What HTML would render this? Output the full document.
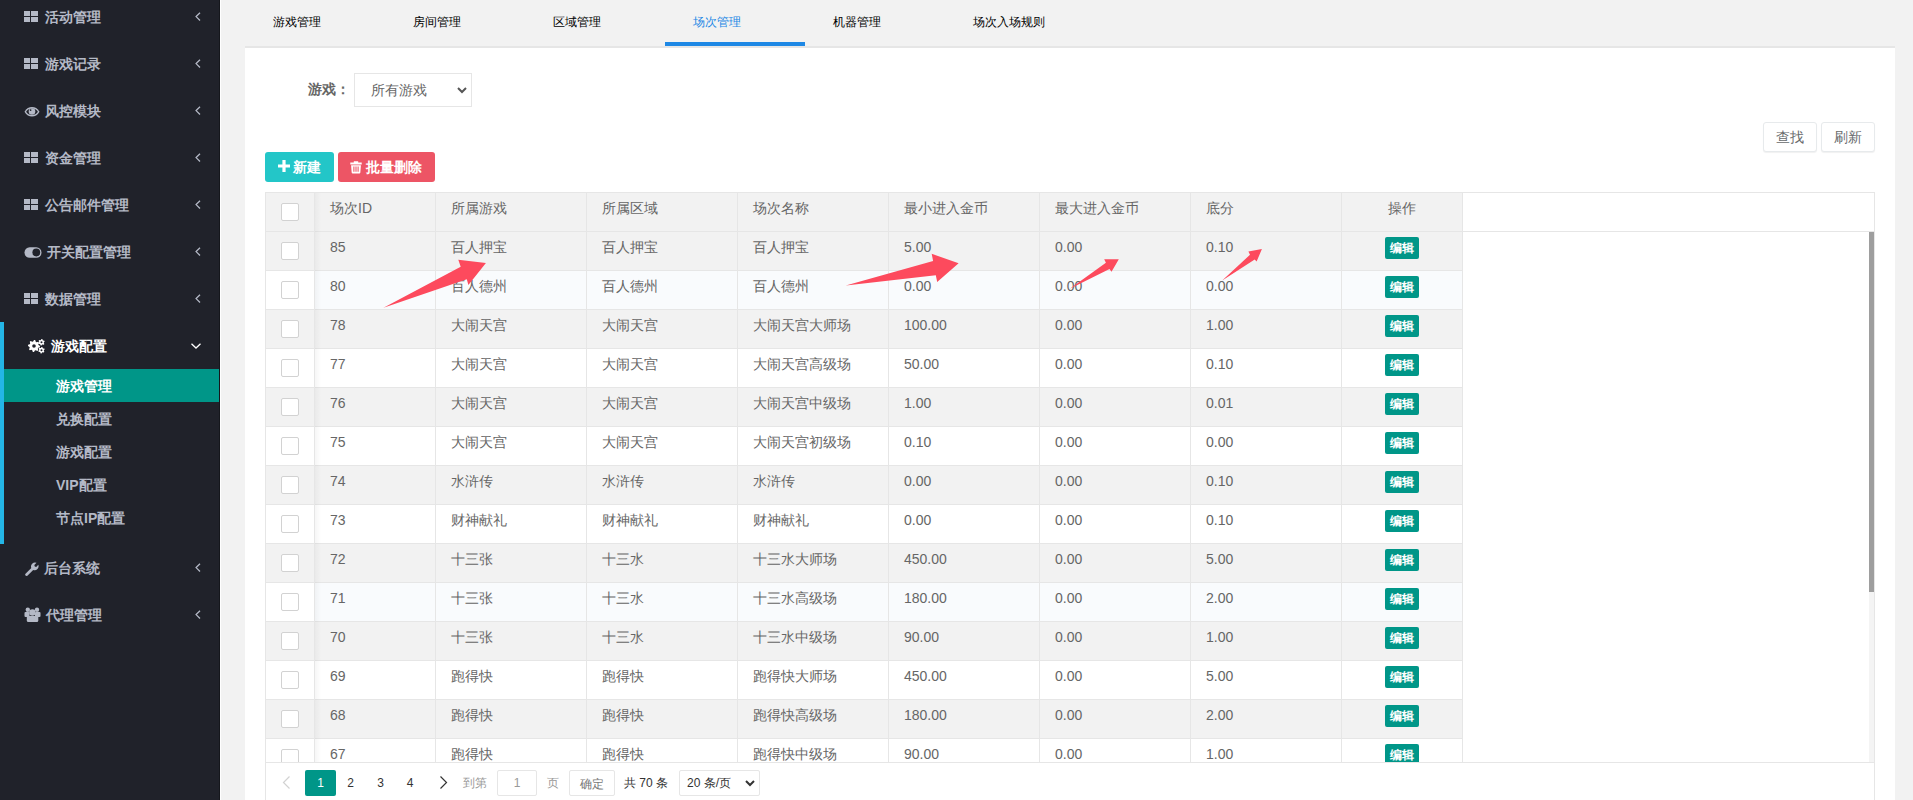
<!DOCTYPE html><html><head><meta charset="utf-8"><style>
*{margin:0;padding:0;box-sizing:border-box}
html,body{width:1913px;height:800px;overflow:hidden;background:#f2f2f2;font-family:"Liberation Sans",sans-serif;position:relative}
div,span{position:absolute;white-space:nowrap}
#side{left:0;top:0;width:219px;height:800px;background:#20222a}
#sideedge{left:219px;top:0;width:1px;height:800px;background:#15171c}
#sidew{left:220px;top:0;width:1px;height:800px;background:#fff}
.mi{left:0;width:219px;height:47px;color:#b4b9c6;font-size:14px;font-weight:bold;line-height:47px}
.mi .t{left:44.5px;top:1px}
.chev{left:195px;width:6px;height:10px}
.sub{left:0;width:219px;height:33px;color:#b4b9c6;font-size:14px;font-weight:bold;line-height:33px}
.sub .t{left:56px;top:1px}
#panel{left:245px;top:46px;width:1650px;height:754px;background:#fff;border-top:2px solid #e6e6e6}
.tab{top:1px;height:42px;line-height:42px;font-size:12px;color:#333}
.hd{font-size:14px;color:#666}
.cell{font-size:14px;color:#666;line-height:39px;height:39px}
.cb{width:18px;height:18px;border:1px solid #d2d2d2;border-radius:2px;background:#fff}
.ebtn{width:34px;height:22px;background:#009688;border-radius:2px;color:#fff;font-size:12px;font-weight:bold;line-height:22px;text-align:center}
.vl{width:1px;background:#e6e6e6}
.hl{height:1px;background:#e6e6e6}
</style></head><body>
<div id="side"></div><div id="sideedge"></div><div id="sidew"></div>
<div class="mi" style="top:-7px">
<svg width="14" height="11" style="position:absolute;left:24px;top:18px"><g fill="currentColor"><rect x="0" y="0" width="6" height="5"/><rect x="7" y="0" width="7" height="5"/><rect x="0" y="6" width="6" height="5"/><rect x="7" y="6" width="7" height="5"/></g></svg>
<span class="t">活动管理</span>
<svg width="6" height="10" style="position:absolute;left:195px;top:19px"><path d="M5 0.7 L1.1 4.6 L5 8.5" stroke="currentColor" stroke-width="1.3" fill="none"/></svg>
</div>
<div class="mi" style="top:40px">
<svg width="14" height="11" style="position:absolute;left:24px;top:18px"><g fill="currentColor"><rect x="0" y="0" width="6" height="5"/><rect x="7" y="0" width="7" height="5"/><rect x="0" y="6" width="6" height="5"/><rect x="7" y="6" width="7" height="5"/></g></svg>
<span class="t">游戏记录</span>
<svg width="6" height="10" style="position:absolute;left:195px;top:19px"><path d="M5 0.7 L1.1 4.6 L5 8.5" stroke="currentColor" stroke-width="1.3" fill="none"/></svg>
</div>
<div class="mi" style="top:87px">
<svg width="16" height="11" style="position:absolute;left:24px;top:19.7px"><path d="M0.5 4.8 C2.5 1.2 5 0.1 8 0.1 C11 0.1 13.5 1.2 15.5 4.8 C13.5 8.4 11 9.4 8 9.4 C5 9.4 2.5 8.4 0.5 4.8Z" fill="currentColor"/><path d="M2.1 4.8 C3.6 2.4 5.6 1.5 8 1.5 C10.4 1.5 12.4 2.4 13.9 4.8 C12.4 7.2 10.4 8.1 8 8.1 C5.6 8.1 3.6 7.2 2.1 4.8Z" fill="#20222a"/><circle cx="8" cy="4.5" r="3.3" fill="currentColor"/><circle cx="6.6" cy="3.1" r="0.9" fill="#20222a"/></svg>
<span class="t" style="left:45px">风控模块</span>
<svg width="6" height="10" style="position:absolute;left:195px;top:19px"><path d="M5 0.7 L1.1 4.6 L5 8.5" stroke="currentColor" stroke-width="1.3" fill="none"/></svg>
</div>
<div class="mi" style="top:134px">
<svg width="14" height="11" style="position:absolute;left:24px;top:18px"><g fill="currentColor"><rect x="0" y="0" width="6" height="5"/><rect x="7" y="0" width="7" height="5"/><rect x="0" y="6" width="6" height="5"/><rect x="7" y="6" width="7" height="5"/></g></svg>
<span class="t">资金管理</span>
<svg width="6" height="10" style="position:absolute;left:195px;top:19px"><path d="M5 0.7 L1.1 4.6 L5 8.5" stroke="currentColor" stroke-width="1.3" fill="none"/></svg>
</div>
<div class="mi" style="top:181px">
<svg width="14" height="11" style="position:absolute;left:24px;top:18px"><g fill="currentColor"><rect x="0" y="0" width="6" height="5"/><rect x="7" y="0" width="7" height="5"/><rect x="0" y="6" width="6" height="5"/><rect x="7" y="6" width="7" height="5"/></g></svg>
<span class="t">公告邮件管理</span>
<svg width="6" height="10" style="position:absolute;left:195px;top:19px"><path d="M5 0.7 L1.1 4.6 L5 8.5" stroke="currentColor" stroke-width="1.3" fill="none"/></svg>
</div>
<div class="mi" style="top:228px">
<svg width="18" height="11" style="position:absolute;left:24px;top:18.5px"><rect x="0.5" y="0.3" width="17" height="10.4" rx="5.2" fill="currentColor"/><circle cx="12.3" cy="5.5" r="3.9" fill="#20222a"/></svg>
<span class="t" style="left:47px">开关配置管理</span>
<svg width="6" height="10" style="position:absolute;left:195px;top:19px"><path d="M5 0.7 L1.1 4.6 L5 8.5" stroke="currentColor" stroke-width="1.3" fill="none"/></svg>
</div>
<div class="mi" style="top:275px">
<svg width="14" height="11" style="position:absolute;left:24px;top:18px"><g fill="currentColor"><rect x="0" y="0" width="6" height="5"/><rect x="7" y="0" width="7" height="5"/><rect x="0" y="6" width="6" height="5"/><rect x="7" y="6" width="7" height="5"/></g></svg>
<span class="t">数据管理</span>
<svg width="6" height="10" style="position:absolute;left:195px;top:19px"><path d="M5 0.7 L1.1 4.6 L5 8.5" stroke="currentColor" stroke-width="1.3" fill="none"/></svg>
</div>
<div style="left:0;top:322px;width:4px;height:222px;background:#24b6e6"></div>
<div class="mi" style="top:322px;left:4px;width:215px;color:#fff">
<svg width="18" height="15" style="position:absolute;left:23.5px;top:16.6px"><path fill="currentColor" fill-rule="evenodd" d="M6.00 1.00 L7.17 1.12 L7.76 2.75 L8.56 3.18 L10.24 2.76 L10.99 3.67 L10.25 5.24 L10.51 6.10 L12.00 7.00 L11.88 8.17 L10.25 8.76 L9.82 9.56 L10.24 11.24 L9.33 11.99 L7.76 11.25 L6.90 11.51 L6.00 13.00 L4.83 12.88 L4.24 11.25 L3.44 10.82 L1.76 11.24 L1.01 10.33 L1.75 8.76 L1.49 7.90 L0.00 7.00 L0.12 5.83 L1.75 5.24 L2.18 4.44 L1.76 2.76 L2.67 2.01 L4.24 2.75 L5.10 2.49Z M4.20 7.00 a1.80 1.80 0 1 0 3.60 0 a1.80 1.80 0 1 0 -3.60 0Z M13.50 0.00 L14.35 0.11 L14.70 1.22 L15.20 1.60 L16.36 1.65 L16.69 2.45 L15.90 3.30 L15.82 3.92 L16.36 4.95 L15.83 5.63 L14.70 5.38 L14.12 5.62 L13.50 6.60 L12.65 6.49 L12.30 5.38 L11.80 5.00 L10.64 4.95 L10.31 4.15 L11.10 3.30 L11.18 2.68 L10.64 1.65 L11.17 0.97 L12.30 1.22 L12.88 0.98Z M12.50 3.30 a1.00 1.00 0 1 0 2.00 0 a1.00 1.00 0 1 0 -2.00 0Z M13.50 7.90 L14.35 8.01 L14.70 9.12 L15.20 9.50 L16.36 9.55 L16.69 10.35 L15.90 11.20 L15.82 11.82 L16.36 12.85 L15.83 13.53 L14.70 13.28 L14.12 13.52 L13.50 14.50 L12.65 14.39 L12.30 13.28 L11.80 12.90 L10.64 12.85 L10.31 12.05 L11.10 11.20 L11.18 10.58 L10.64 9.55 L11.17 8.87 L12.30 9.12 L12.88 8.88Z M12.50 11.20 a1.00 1.00 0 1 0 2.00 0 a1.00 1.00 0 1 0 -2.00 0Z"/></svg>
<span class="t" style="left:47px">游戏配置</span>
<svg width="10" height="6" style="position:absolute;left:187px;top:21px"><path d="M0.5 0.8 L5 5 L9.5 0.8" stroke="currentColor" stroke-width="1.3" fill="none"/></svg>
</div>
<div class="sub" style="top:369px;left:4px;width:215px;background:#009688;color:#fff"><span class="t" style="left:52px">游戏管理</span></div>
<div class="sub" style="top:402px"><span class="t">兑换配置</span></div>
<div class="sub" style="top:435px"><span class="t">游戏配置</span></div>
<div class="sub" style="top:468px"><span class="t">VIP配置</span></div>
<div class="sub" style="top:501px"><span class="t">节点IP配置</span></div>
<div class="mi" style="top:544px">
<svg width="15" height="15" style="position:absolute;left:24px;top:17.5px"><path d="M1.5 11.8 L7.3 6 A4 4 0 0 1 12.5 0.8 L10.3 3 L10.8 4.4 L12.2 4.9 L14.3 2.8 A4 4 0 0 1 9.2 8 L3.4 13.7 A1.35 1.35 0 0 1 1.5 11.8Z" fill="currentColor"/></svg>
<span class="t" style="left:44px">后台系统</span>
<svg width="6" height="10" style="position:absolute;left:195px;top:19px"><path d="M5 0.7 L1.1 4.6 L5 8.5" stroke="currentColor" stroke-width="1.3" fill="none"/></svg>
</div>
<div class="mi" style="top:591px">
<svg width="17" height="15" style="position:absolute;left:24px;top:16px"><g fill="currentColor"><circle cx="3.8" cy="2.8" r="2.2"/><circle cx="13" cy="2.8" r="2.2"/><rect x="0.5" y="5" width="5" height="5" rx="1"/><rect x="11" y="5" width="5.5" height="5" rx="1"/><circle cx="8.4" cy="5.5" r="3.2"/><rect x="2.8" y="9" width="11.5" height="6" rx="1.5"/></g></svg>
<span class="t" style="left:46px">代理管理</span>
<svg width="6" height="10" style="position:absolute;left:195px;top:19px"><path d="M5 0.7 L1.1 4.6 L5 8.5" stroke="currentColor" stroke-width="1.3" fill="none"/></svg>
</div>
<div class="tab" style="left:273px;color:#000">游戏管理</div>
<div class="tab" style="left:413px;color:#000">房间管理</div>
<div class="tab" style="left:553px;color:#000">区域管理</div>
<div class="tab" style="left:693px;color:#1e88e5">场次管理</div>
<div class="tab" style="left:833px;color:#000">机器管理</div>
<div class="tab" style="left:973px;color:#000">场次入场规则</div>
<div style="left:665px;top:42px;width:140px;height:4px;background:#1e88e5;z-index:2"></div>
<div id="panel"></div>
<div style="left:308px;top:80px;font-size:14px;font-weight:bold;color:#666;line-height:18px">游戏：</div>
<div style="left:354px;top:73px;width:118px;height:34px;border:1px solid #e6e6e6;background:#fff"></div>
<div style="left:371px;top:81px;font-size:14px;color:#666;line-height:18px">所有游戏</div>
<svg width="10" height="7" style="position:absolute;left:457px;top:87px"><path d="M1 1 L5 5 L9 1" stroke="#555" stroke-width="2" fill="none"/></svg>
<div style="left:1763px;top:122px;width:54px;height:30px;border:1px solid #e7eaec;border-radius:3px;background:#fff;box-shadow:0 1px 1px rgba(0,0,0,.06);font-size:14px;color:#676a6c;line-height:28px;text-align:center">查找</div>
<div style="left:1821px;top:122px;width:54px;height:30px;border:1px solid #e7eaec;border-radius:3px;background:#fff;box-shadow:0 1px 1px rgba(0,0,0,.06);font-size:14px;color:#676a6c;line-height:28px;text-align:center">刷新</div>
<div style="left:265px;top:152px;width:69px;height:30px;background:#23c6c8;border-radius:3px;color:#fff;font-size:14px;font-weight:bold;line-height:30px"><svg width="12" height="12" style="position:absolute;left:12.5px;top:8px"><path d="M4.4 0h3.2v4.4h4.4v3.2h-4.4v4.4h-3.2v-4.4h-4.4v-3.2h4.4z" fill="#fff"/></svg><span style="left:28px;top:0">新建</span></div>
<div style="left:338px;top:152px;width:97px;height:30px;background:#ed5565;border-radius:3px;color:#fff;font-size:14px;font-weight:bold;line-height:30px"><svg width="12" height="13" style="position:absolute;left:12.4px;top:8.8px"><path d="M3.8 0.3h4.4v1.6h-4.4z M0.3 1.6h11.4v2h-11.4z M1.1 4.2h9.8l-0.55 7.2a1.1 1.1 0 0 1-1.1 1h-6.5a1.1 1.1 0 0 1-1.1-1z" fill="#fff"/><path d="M3.9 5.4v5.4M6 5.4v5.4M8.1 5.4v5.4" stroke="#ed5565" stroke-width="1.1"/></svg><span style="left:28px;top:0">批量删除</span></div>
<div style="left:265px;top:192px;width:1610px;height:640px;border:1px solid #e6e6e6;background:#fff"></div>
<div style="left:266px;top:193px;width:1196px;height:38px;background:#f2f2f2"></div>
<div class="hl" style="left:266px;top:231px;width:1608px"></div>
<div style="left:266px;top:232px;width:1196px;height:38px;background:#f2f2f2;overflow:hidden">
<span class="cell" style="left:64px;top:-4px">85</span>
<span class="cell" style="left:185px;top:-4px">百人押宝</span>
<span class="cell" style="left:336px;top:-4px">百人押宝</span>
<span class="cell" style="left:487px;top:-4px">百人押宝</span>
<span class="cell" style="left:638px;top:-4px">5.00</span>
<span class="cell" style="left:789px;top:-4px">0.00</span>
<span class="cell" style="left:940px;top:-4px">0.10</span>
<div class="ebtn" style="left:1119px;top:5px">编辑</div>
<div class="cb" style="left:15px;top:10px"></div>
</div>
<div class="hl" style="left:266px;top:270px;width:1196px"></div>
<div style="left:266px;top:271px;width:1196px;height:38px;background:#f9fbfd;overflow:hidden">
<span class="cell" style="left:64px;top:-4px">80</span>
<span class="cell" style="left:185px;top:-4px">百人德州</span>
<span class="cell" style="left:336px;top:-4px">百人德州</span>
<span class="cell" style="left:487px;top:-4px">百人德州</span>
<span class="cell" style="left:638px;top:-4px">0.00</span>
<span class="cell" style="left:789px;top:-4px">0.00</span>
<span class="cell" style="left:940px;top:-4px">0.00</span>
<div class="ebtn" style="left:1119px;top:5px">编辑</div>
<div style="left:0;top:0;width:48px;height:38px;background:#fff"></div>
<div class="cb" style="left:15px;top:10px"></div>
</div>
<div class="hl" style="left:266px;top:309px;width:1196px"></div>
<div style="left:266px;top:310px;width:1196px;height:38px;background:#f2f2f2;overflow:hidden">
<span class="cell" style="left:64px;top:-4px">78</span>
<span class="cell" style="left:185px;top:-4px">大闹天宫</span>
<span class="cell" style="left:336px;top:-4px">大闹天宫</span>
<span class="cell" style="left:487px;top:-4px">大闹天宫大师场</span>
<span class="cell" style="left:638px;top:-4px">100.00</span>
<span class="cell" style="left:789px;top:-4px">0.00</span>
<span class="cell" style="left:940px;top:-4px">1.00</span>
<div class="ebtn" style="left:1119px;top:5px">编辑</div>
<div class="cb" style="left:15px;top:10px"></div>
</div>
<div class="hl" style="left:266px;top:348px;width:1196px"></div>
<div style="left:266px;top:349px;width:1196px;height:38px;background:#fff;overflow:hidden">
<span class="cell" style="left:64px;top:-4px">77</span>
<span class="cell" style="left:185px;top:-4px">大闹天宫</span>
<span class="cell" style="left:336px;top:-4px">大闹天宫</span>
<span class="cell" style="left:487px;top:-4px">大闹天宫高级场</span>
<span class="cell" style="left:638px;top:-4px">50.00</span>
<span class="cell" style="left:789px;top:-4px">0.00</span>
<span class="cell" style="left:940px;top:-4px">0.10</span>
<div class="ebtn" style="left:1119px;top:5px">编辑</div>
<div class="cb" style="left:15px;top:10px"></div>
</div>
<div class="hl" style="left:266px;top:387px;width:1196px"></div>
<div style="left:266px;top:388px;width:1196px;height:38px;background:#f2f2f2;overflow:hidden">
<span class="cell" style="left:64px;top:-4px">76</span>
<span class="cell" style="left:185px;top:-4px">大闹天宫</span>
<span class="cell" style="left:336px;top:-4px">大闹天宫</span>
<span class="cell" style="left:487px;top:-4px">大闹天宫中级场</span>
<span class="cell" style="left:638px;top:-4px">1.00</span>
<span class="cell" style="left:789px;top:-4px">0.00</span>
<span class="cell" style="left:940px;top:-4px">0.01</span>
<div class="ebtn" style="left:1119px;top:5px">编辑</div>
<div class="cb" style="left:15px;top:10px"></div>
</div>
<div class="hl" style="left:266px;top:426px;width:1196px"></div>
<div style="left:266px;top:427px;width:1196px;height:38px;background:#fff;overflow:hidden">
<span class="cell" style="left:64px;top:-4px">75</span>
<span class="cell" style="left:185px;top:-4px">大闹天宫</span>
<span class="cell" style="left:336px;top:-4px">大闹天宫</span>
<span class="cell" style="left:487px;top:-4px">大闹天宫初级场</span>
<span class="cell" style="left:638px;top:-4px">0.10</span>
<span class="cell" style="left:789px;top:-4px">0.00</span>
<span class="cell" style="left:940px;top:-4px">0.00</span>
<div class="ebtn" style="left:1119px;top:5px">编辑</div>
<div class="cb" style="left:15px;top:10px"></div>
</div>
<div class="hl" style="left:266px;top:465px;width:1196px"></div>
<div style="left:266px;top:466px;width:1196px;height:38px;background:#f2f2f2;overflow:hidden">
<span class="cell" style="left:64px;top:-4px">74</span>
<span class="cell" style="left:185px;top:-4px">水浒传</span>
<span class="cell" style="left:336px;top:-4px">水浒传</span>
<span class="cell" style="left:487px;top:-4px">水浒传</span>
<span class="cell" style="left:638px;top:-4px">0.00</span>
<span class="cell" style="left:789px;top:-4px">0.00</span>
<span class="cell" style="left:940px;top:-4px">0.10</span>
<div class="ebtn" style="left:1119px;top:5px">编辑</div>
<div class="cb" style="left:15px;top:10px"></div>
</div>
<div class="hl" style="left:266px;top:504px;width:1196px"></div>
<div style="left:266px;top:505px;width:1196px;height:38px;background:#fff;overflow:hidden">
<span class="cell" style="left:64px;top:-4px">73</span>
<span class="cell" style="left:185px;top:-4px">财神献礼</span>
<span class="cell" style="left:336px;top:-4px">财神献礼</span>
<span class="cell" style="left:487px;top:-4px">财神献礼</span>
<span class="cell" style="left:638px;top:-4px">0.00</span>
<span class="cell" style="left:789px;top:-4px">0.00</span>
<span class="cell" style="left:940px;top:-4px">0.10</span>
<div class="ebtn" style="left:1119px;top:5px">编辑</div>
<div class="cb" style="left:15px;top:10px"></div>
</div>
<div class="hl" style="left:266px;top:543px;width:1196px"></div>
<div style="left:266px;top:544px;width:1196px;height:38px;background:#f2f2f2;overflow:hidden">
<span class="cell" style="left:64px;top:-4px">72</span>
<span class="cell" style="left:185px;top:-4px">十三张</span>
<span class="cell" style="left:336px;top:-4px">十三水</span>
<span class="cell" style="left:487px;top:-4px">十三水大师场</span>
<span class="cell" style="left:638px;top:-4px">450.00</span>
<span class="cell" style="left:789px;top:-4px">0.00</span>
<span class="cell" style="left:940px;top:-4px">5.00</span>
<div class="ebtn" style="left:1119px;top:5px">编辑</div>
<div class="cb" style="left:15px;top:10px"></div>
</div>
<div class="hl" style="left:266px;top:582px;width:1196px"></div>
<div style="left:266px;top:583px;width:1196px;height:38px;background:#f9fbfd;overflow:hidden">
<span class="cell" style="left:64px;top:-4px">71</span>
<span class="cell" style="left:185px;top:-4px">十三张</span>
<span class="cell" style="left:336px;top:-4px">十三水</span>
<span class="cell" style="left:487px;top:-4px">十三水高级场</span>
<span class="cell" style="left:638px;top:-4px">180.00</span>
<span class="cell" style="left:789px;top:-4px">0.00</span>
<span class="cell" style="left:940px;top:-4px">2.00</span>
<div class="ebtn" style="left:1119px;top:5px">编辑</div>
<div style="left:0;top:0;width:48px;height:38px;background:#fff"></div>
<div class="cb" style="left:15px;top:10px"></div>
</div>
<div class="hl" style="left:266px;top:621px;width:1196px"></div>
<div style="left:266px;top:622px;width:1196px;height:38px;background:#f2f2f2;overflow:hidden">
<span class="cell" style="left:64px;top:-4px">70</span>
<span class="cell" style="left:185px;top:-4px">十三张</span>
<span class="cell" style="left:336px;top:-4px">十三水</span>
<span class="cell" style="left:487px;top:-4px">十三水中级场</span>
<span class="cell" style="left:638px;top:-4px">90.00</span>
<span class="cell" style="left:789px;top:-4px">0.00</span>
<span class="cell" style="left:940px;top:-4px">1.00</span>
<div class="ebtn" style="left:1119px;top:5px">编辑</div>
<div class="cb" style="left:15px;top:10px"></div>
</div>
<div class="hl" style="left:266px;top:660px;width:1196px"></div>
<div style="left:266px;top:661px;width:1196px;height:38px;background:#fff;overflow:hidden">
<span class="cell" style="left:64px;top:-4px">69</span>
<span class="cell" style="left:185px;top:-4px">跑得快</span>
<span class="cell" style="left:336px;top:-4px">跑得快</span>
<span class="cell" style="left:487px;top:-4px">跑得快大师场</span>
<span class="cell" style="left:638px;top:-4px">450.00</span>
<span class="cell" style="left:789px;top:-4px">0.00</span>
<span class="cell" style="left:940px;top:-4px">5.00</span>
<div class="ebtn" style="left:1119px;top:5px">编辑</div>
<div class="cb" style="left:15px;top:10px"></div>
</div>
<div class="hl" style="left:266px;top:699px;width:1196px"></div>
<div style="left:266px;top:700px;width:1196px;height:38px;background:#f2f2f2;overflow:hidden">
<span class="cell" style="left:64px;top:-4px">68</span>
<span class="cell" style="left:185px;top:-4px">跑得快</span>
<span class="cell" style="left:336px;top:-4px">跑得快</span>
<span class="cell" style="left:487px;top:-4px">跑得快高级场</span>
<span class="cell" style="left:638px;top:-4px">180.00</span>
<span class="cell" style="left:789px;top:-4px">0.00</span>
<span class="cell" style="left:940px;top:-4px">2.00</span>
<div class="ebtn" style="left:1119px;top:5px">编辑</div>
<div class="cb" style="left:15px;top:10px"></div>
</div>
<div class="hl" style="left:266px;top:738px;width:1196px"></div>
<div style="left:266px;top:739px;width:1196px;height:23px;background:#fff;overflow:hidden">
<span class="cell" style="left:64px;top:-4px">67</span>
<span class="cell" style="left:185px;top:-4px">跑得快</span>
<span class="cell" style="left:336px;top:-4px">跑得快</span>
<span class="cell" style="left:487px;top:-4px">跑得快中级场</span>
<span class="cell" style="left:638px;top:-4px">90.00</span>
<span class="cell" style="left:789px;top:-4px">0.00</span>
<span class="cell" style="left:940px;top:-4px">1.00</span>
<div class="ebtn" style="left:1119px;top:5px">编辑</div>
<div class="cb" style="left:15px;top:10px"></div>
</div>
<div class="vl" style="left:314px;top:193px;height:569px"></div>
<div class="vl" style="left:435px;top:193px;height:569px"></div>
<div class="vl" style="left:586px;top:193px;height:569px"></div>
<div class="vl" style="left:737px;top:193px;height:569px"></div>
<div class="vl" style="left:888px;top:193px;height:569px"></div>
<div class="vl" style="left:1039px;top:193px;height:569px"></div>
<div class="vl" style="left:1190px;top:193px;height:569px"></div>
<div class="vl" style="left:1341px;top:193px;height:569px"></div>
<div class="vl" style="left:1462px;top:193px;height:569px"></div>
<span class="hd" style="left:330px;top:193px;line-height:30px">场次ID</span>
<span class="hd" style="left:451px;top:193px;line-height:30px">所属游戏</span>
<span class="hd" style="left:602px;top:193px;line-height:30px">所属区域</span>
<span class="hd" style="left:753px;top:193px;line-height:30px">场次名称</span>
<span class="hd" style="left:904px;top:193px;line-height:30px">最小进入金币</span>
<span class="hd" style="left:1055px;top:193px;line-height:30px">最大进入金币</span>
<span class="hd" style="left:1206px;top:193px;line-height:30px">底分</span>
<span class="hd" style="left:1388px;top:193px;line-height:30px">操作</span>
<div class="cb" style="left:281px;top:203px"></div>
<div style="left:315px;top:193px;width:6px;height:569px;background:linear-gradient(to right,rgba(0,0,0,.035),rgba(0,0,0,0))"></div>
<div style="left:1869px;top:232px;width:5px;height:530px;background:#f4f4f4"></div>
<div style="left:1869px;top:232px;width:5px;height:360px;background:#9e9e9e"></div>
<div class="hl" style="left:266px;top:762px;width:1608px"></div>
<svg width="9" height="13" style="position:absolute;left:282px;top:776px"><path d="M7.5 0.5 L1.5 6.5 L7.5 12.5" stroke="#d2d2d2" stroke-width="1.2" fill="none"/></svg>
<div style="left:305px;top:770px;width:31px;height:26px;background:#009688;border-radius:2px;color:#fff;font-size:12px;line-height:26px;text-align:center">1</div>
<div style="left:340.5px;top:770px;width:20px;height:26px;font-size:12px;color:#333;line-height:26px;text-align:center">2</div>
<div style="left:370.5px;top:770px;width:20px;height:26px;font-size:12px;color:#333;line-height:26px;text-align:center">3</div>
<div style="left:400px;top:770px;width:20px;height:26px;font-size:12px;color:#333;line-height:26px;text-align:center">4</div>
<svg width="9" height="13" style="position:absolute;left:439px;top:776px"><path d="M1.5 0.5 L7.5 6.5 L1.5 12.5" stroke="#333" stroke-width="1.2" fill="none"/></svg>
<div style="left:463px;top:770px;font-size:12px;color:#999;line-height:26px">到第</div>
<div style="left:497px;top:770px;width:40px;height:26px;border:1px solid #e6e6e6;border-radius:2px;font-size:12px;color:#999;line-height:24px;text-align:center">1</div>
<div style="left:546.5px;top:770px;font-size:12px;color:#999;line-height:26px">页</div>
<div style="left:569px;top:770px;width:46px;height:26px;border:1px solid #e6e6e6;border-radius:2px;font-size:12px;color:#777;line-height:26px;text-align:center">确定</div>
<div style="left:624px;top:770px;font-size:12px;color:#333;line-height:26px">共 70 条</div>
<div style="left:679px;top:770px;width:81px;height:26px;border:1px solid #e6e6e6;border-radius:2px;font-size:12px;color:#333;line-height:24px;padding-left:7px">20 条/页</div>
<svg width="10" height="7" style="position:absolute;left:745px;top:780px"><path d="M1 1 L5 5 L9 1" stroke="#333" stroke-width="2" fill="none"/></svg>
<svg width="1913" height="800" style="position:absolute;left:0;top:0;z-index:10">
<polygon points="383.5,307.7 460.7,266.7 458.3,259.7 485.9,263.0 468.4,285.0 466.8,279.2" fill="#fd4a5d"/>
<polygon points="845.8,285.4 933.1,261.0 931.7,253.8 958.6,263.2 937.2,282.0 935.8,275.2" fill="#fd4a5d"/>
<polygon points="1069.8,288.8 1105.9,262.7 1104.2,259.3 1118.8,259.3 1111.5,271.7 1109.5,269.1" fill="#fd4a5d"/>
<polygon points="1222.2,280.6 1250.0,254.7 1248.4,251.6 1261.9,249.1 1256.6,261.6 1254.7,259.4" fill="#fd4a5d"/>
</svg>
</body></html>
